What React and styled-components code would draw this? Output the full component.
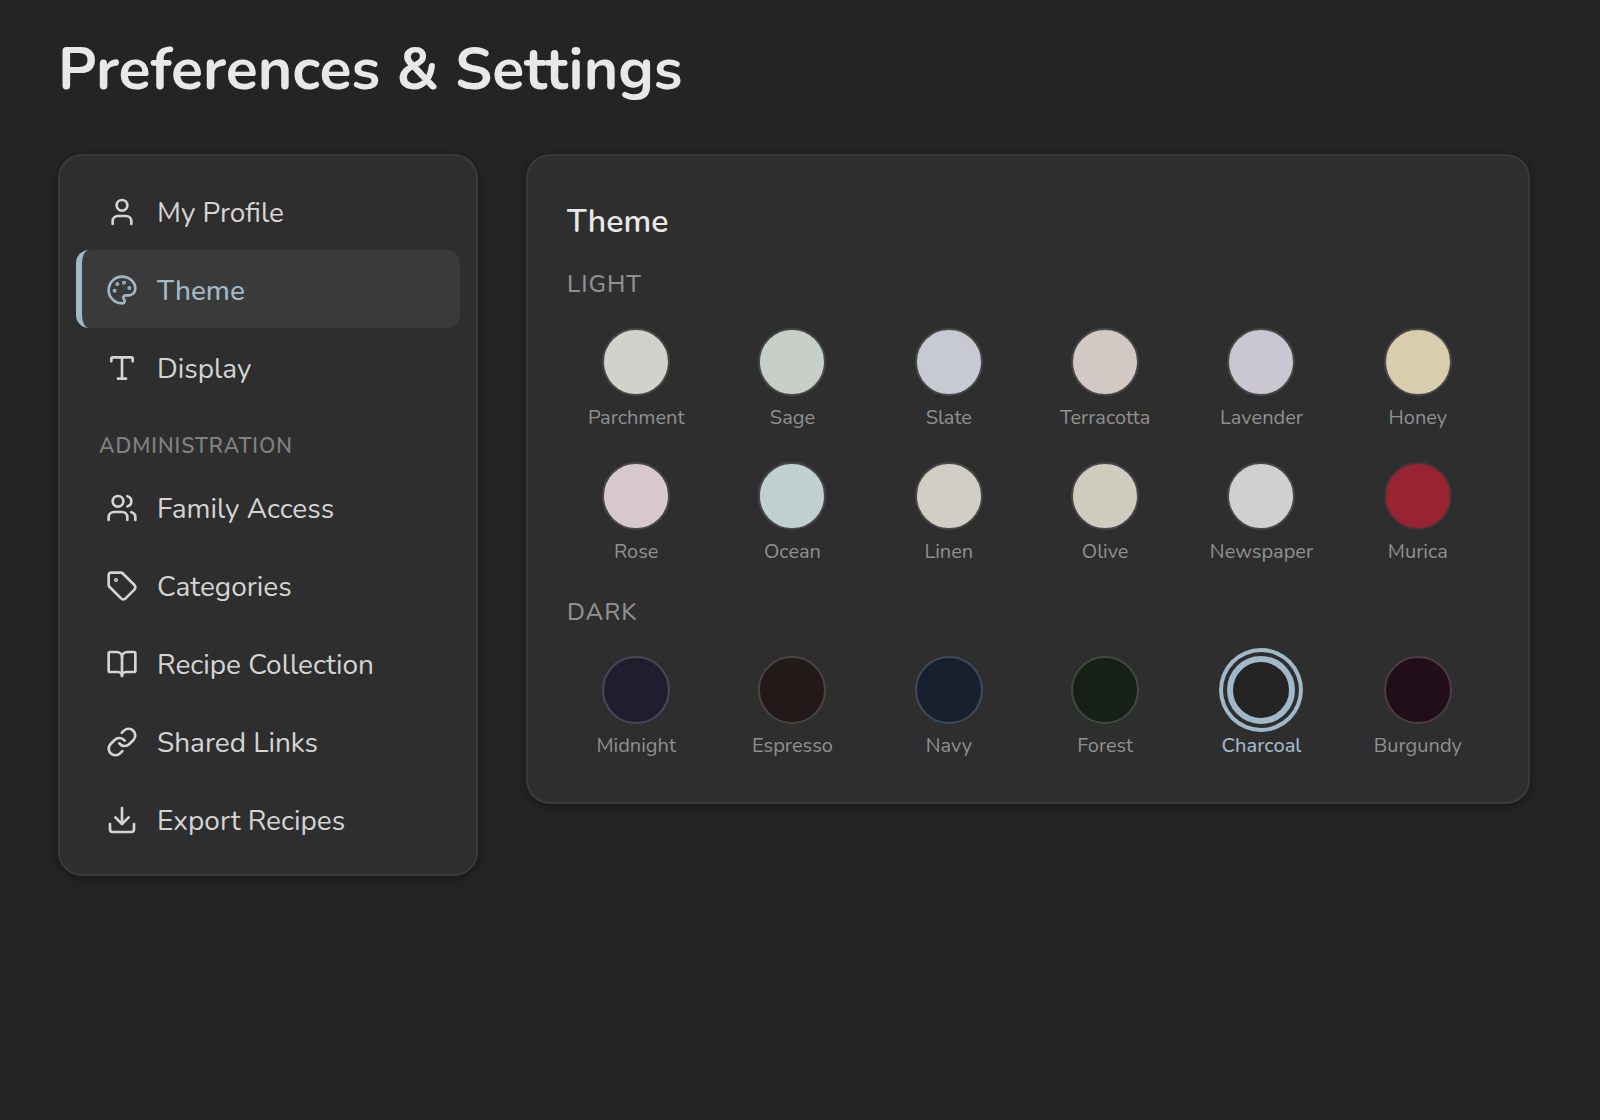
import React, { useState } from 'react';
import styled, { createGlobalStyle } from 'styled-components';
import { User, Palette, Type, Users, Tag, BookOpen, Link, Download } from 'lucide-react';

const GlobalStyle = createGlobalStyle`
    * {
        box-sizing: border-box;
    }

    body {
        margin: 0;
        background: #242424;
        color: #e8e8e8;
        font-family: Nunito, Lato, "Open Sans", sans-serif;
    }

    button {
        font-family: inherit;
        cursor: pointer;
    }
`

const Page = styled.main`
    min-height: 100vh;
    padding: 34px 70px 48px 58px;
`

const PageTitle = styled.h1`
    margin: 0 0 48px;
    font-size: 59px;
    line-height: 72px;
    font-weight: 700;
`

const Layout = styled.div`
    display: grid;
    grid-template-columns: 420px minmax(0, 1fr);
    gap: 48px;
    align-items: start;
`

const Card = styled.section`
    background: #2e2e2e;
    border: 2px solid #3a3a3a;
    border-radius: 24px;
    box-shadow: 0 2px 8px rgba(0, 0, 0, 0.4);
`

const SideMenu = styled(Card).attrs({ as: 'nav' })`
    padding: 16px;
`

const MenuItem = styled.button`
    display: flex;
    align-items: center;
    gap: 19px;
    width: 100%;
    height: 78px;
    padding: 2px 24px 0;
    border: 0;
    border-left: 6px solid ${props => props.$active ? '#a0b8c8' : 'transparent'};
    border-radius: 13px;
    background: ${props => props.$active ? '#3a3a3a' : 'transparent'};
    color: ${props => props.$active ? '#a0b8c8' : '#d4d4d4'};
    font-size: 28px;
    font-weight: ${props => props.$active ? 500 : 400};
    text-align: left;
`

const MenuLabel = styled.span`
    padding-top: 2px;
`

const MenuHeading = styled.h2`
    margin: 0;
    padding: 25px 23px 7px;
    color: #808080;
    font-size: 21px;
    line-height: 30px;
    font-weight: 600;
    letter-spacing: 1px;
    text-transform: uppercase;
`

const Panel = styled(Card)`
    padding: 42px 41px 14px 39px;
`

const PanelTitle = styled.h2`
    margin: 0 0 20px;
    font-size: 32px;
    line-height: 48px;
    font-weight: 600;
`

const GroupTitle = styled.h3`
    margin: 0 0 18px;
    color: #909090;
    font-size: 24px;
    line-height: 36px;
    font-weight: 500;
    letter-spacing: 1px;
    text-transform: uppercase;
`

const SwatchGrid = styled.div`
    display: grid;
    grid-template-columns: repeat(6, minmax(0, 1fr));
    gap: 16px 18px;
    margin-bottom: 22px;
`

const Swatch = styled.button`
    display: flex;
    flex-direction: column;
    align-items: center;
    gap: 8px;
    padding: 8px 0 6px;
    border: 0;
    background: transparent;
    color: ${props => props.$active ? '#a0b8c8' : '#909090'};
    font-size: 20px;
    line-height: 28px;
    font-weight: ${props => props.$active ? 500 : 400};
`

const SwatchColor = styled.span`
    width: 68px;
    height: 68px;
    border: ${props => props.$active ? '6px' : '2px'} solid ${props => props.$active ? '#a0b8c8' : props.$border};
    border-radius: 50%;
    background: ${props => props.$color};
    box-shadow: ${props => props.$active ? '0 0 0 4px #2e2e2e, 0 0 0 8px #a0b8c8' : 'none'};
`

const mainMenu = [
    { name: 'My Profile', icon: User },
    { name: 'Theme', icon: Palette },
    { name: 'Display', icon: Type },
]

const adminMenu = [
    { name: 'Family Access', icon: Users },
    { name: 'Categories', icon: Tag },
    { name: 'Recipe Collection', icon: BookOpen },
    { name: 'Shared Links', icon: Link },
    { name: 'Export Recipes', icon: Download },
]

const lightThemes = [
    { name: 'Parchment', color: '#d3d1cc', border: '#484848' },
    { name: 'Sage', color: '#c8cfc8', border: '#484848' },
    { name: 'Slate', color: '#c8cad3', border: '#484848' },
    { name: 'Terracotta', color: '#d3c8c3', border: '#484848' },
    { name: 'Lavender', color: '#cac7d2', border: '#484848' },
    { name: 'Honey', color: '#d8ceae', border: '#484848' },
    { name: 'Rose', color: '#d8c8cc', border: '#484848' },
    { name: 'Ocean', color: '#c0d0d0', border: '#484848' },
    { name: 'Linen', color: '#d2cec6', border: '#484848' },
    { name: 'Olive', color: '#cecbbf', border: '#484848' },
    { name: 'Newspaper', color: '#d0d0ce', border: '#484848' },
    { name: 'Murica', color: '#982432', border: '#443436' },
]

const darkThemes = [
    { name: 'Midnight', color: '#201e2e', border: '#4a4858' },
    { name: 'Espresso', color: '#221a18', border: '#4a4442' },
    { name: 'Navy', color: '#182030', border: '#404a58' },
    { name: 'Forest', color: '#172016', border: '#404a40' },
    { name: 'Charcoal', color: '#242424', border: '#4a4a4a' },
    { name: 'Burgundy', color: '#220e18', border: '#4a3e44' },
]

const MenuList = ({ items, current, onSelect }) => items.map(({ name, icon: Icon }) => (
    <MenuItem key={name} type="button" $active={name === current} onClick={() => onSelect(name)}>
        <Icon size={32} aria-hidden="true" />
        <MenuLabel>{name}</MenuLabel>
    </MenuItem>
))

const ThemeGroup = ({ title, themes, current, onSelect }) => (
    <>
        <GroupTitle>{title}</GroupTitle>
        <SwatchGrid>
            {themes.map(({ name, color, border }) => (
                <Swatch
                    key={name}
                    type="button"
                    aria-pressed={name === current}
                    $active={name === current}
                    onClick={() => onSelect(name)}
                >
                    <SwatchColor $color={color} $border={border} $active={name === current} />
                    {name}
                </Swatch>
            ))}
        </SwatchGrid>
    </>
)

const App = () => {
    const [section, setSection] = useState('Theme');
    const [theme, setTheme] = useState('Charcoal');

    return (
        <Page>
            <GlobalStyle />
            <PageTitle>Preferences &amp; Settings</PageTitle>
            <Layout>
                <SideMenu>
                    <MenuList items={mainMenu} current={section} onSelect={setSection} />
                    <MenuHeading>Administration</MenuHeading>
                    <MenuList items={adminMenu} current={section} onSelect={setSection} />
                </SideMenu>
                <Panel>
                    <PanelTitle>Theme</PanelTitle>
                    <ThemeGroup title="Light" themes={lightThemes} current={theme} onSelect={setTheme} />
                    <ThemeGroup title="Dark" themes={darkThemes} current={theme} onSelect={setTheme} />
                </Panel>
            </Layout>
        </Page>
    )
}

export default App;
